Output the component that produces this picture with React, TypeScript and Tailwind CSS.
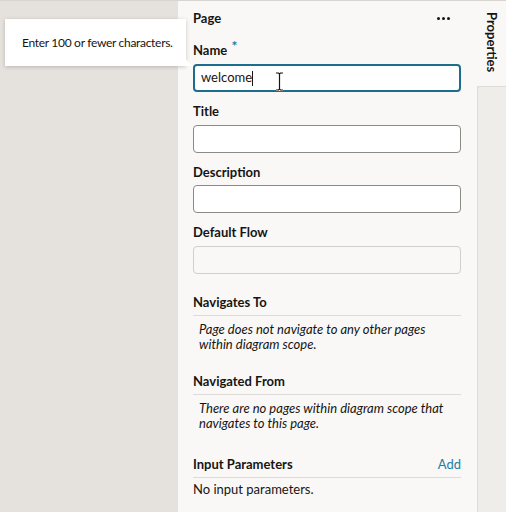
import React from "react";

const font = { fontFamily: 'Lato, "Noto Sans", sans-serif' };

function Label({ children, className = "" }: { children: React.ReactNode; className?: string }) {
  return (
    <div className={`h-[16px] text-[13px] leading-[16px] font-bold text-[#161513] whitespace-nowrap ${className}`}>{children}</div>
  );
}

function Section({ title, children, right }: { title: string; children: React.ReactNode; right?: React.ReactNode }) {
  return (
    <div className="flex flex-col">
      <div className="flex items-center justify-between h-[16px]">
        <Label>{title}</Label>
        {right}
      </div>
      <div className="mt-[5px] border-t border-[#dedcd8]" />
      {children}
    </div>
  );
}

export default function App() {
  return (
    <div
      className="relative w-[506px] h-[512px] flex bg-[#e5e2de] overflow-hidden border-t border-[#d8d5d1]"
      style={font}
    >
      <div className="w-[178px] shrink-0" />
      <div className="w-[299px] shrink-0 bg-[#f9f8f6] pl-[15px] pr-[16px] pt-[9px] flex flex-col">
        <div className="flex items-center justify-between h-[16px]">
          <Label>Page</Label>
          <div className="flex gap-[2px] mr-[11px]">
            <span className="w-[3px] h-[3px] rounded-full bg-[#161513]" />
            <span className="w-[3px] h-[3px] rounded-full bg-[#161513]" />
            <span className="w-[3px] h-[3px] rounded-full bg-[#161513]" />
          </div>
        </div>
        <Label className="mt-[16px]">
          Name{" "}
          <span className="text-[#227e9e] ml-[1px] relative -top-[4px] text-[14px] font-bold">*</span>
        </Label>
        <div className="relative mt-[6px] h-[28px] shrink-0 rounded-[4px] border-2 border-[#1b6e8c] bg-white flex items-center pl-[6px] text-[13px] text-[#161513]">
          welcome
          <span className="inline-block w-[1px] h-[15px] bg-[#161513]" />
          <svg className="absolute left-[80px] top-[6px]" width="9" height="19" viewBox="0 0 9 19">
            <path d="M1 1h2.5l1 1 1-1H8M4.5 2v15M1 18h2.5l1-1 1 1H8" stroke="#fff" strokeWidth="3" fill="none" />
            <path d="M1 1h2.5l1 1 1-1H8M4.5 2v15M1 18h2.5l1-1 1 1H8" stroke="#161513" strokeWidth="1.2" fill="none" />
          </svg>
        </div>
        <Label className="mt-[11px]">Title</Label>
        <div className="mt-[6px] h-[28px] shrink-0 rounded-[4px] border border-[#8c8a87] bg-white" />
        <Label className="mt-[11px]">Description</Label>
        <div className="mt-[5px] h-[28px] shrink-0 rounded-[4px] border border-[#8c8a87] bg-white" />
        <Label className="mt-[11px]">Default Flow</Label>
        <div className="mt-[6px] h-[28px] shrink-0 rounded-[4px] border border-[#d1cfcb] bg-[#f9f8f6]" />
        <div className="mt-[20px]">
          <Section title="Navigates To">
            <div className="mt-[6px] pl-[6px] italic text-[13px] leading-[15px] text-[#161513] whitespace-nowrap">
              Page does not navigate to any other pages
              <br />
              within diagram scope.
            </div>
          </Section>
        </div>
        <div className="mt-[21px]">
          <Section title="Navigated From">
            <div className="mt-[6px] pl-[6px] italic text-[13px] leading-[15px] text-[#161513] whitespace-nowrap">
              There are no pages within diagram scope that
              <br />
              navigates to this page.
            </div>
          </Section>
        </div>
        <div className="mt-[25px]">
          <Section
            title="Input Parameters"
            right={<span className="text-[13px] leading-[16px] text-[#227e9e]">Add</span>}
          >
            <div className="mt-[3px] text-[13px] leading-[16px] text-[#161513]">No input parameters.</div>
          </Section>
        </div>
      </div>
      <div className="w-[29px] shrink-0 flex flex-col">
        <div className="h-[85px] bg-[#f9f8f6] flex justify-center pt-[11px]">
          <span
            className="text-[13px] font-bold text-[#161513] leading-[14px]"
            style={{ writingMode: "vertical-rl" }}
          >
            Properties
          </span>
        </div>
        <div className="flex-1 bg-[#efedea] border-l border-t border-[#dedcd8] rounded-tl-[3px]" />
      </div>

      <div className="absolute left-[5px] top-[18px] w-[181px] h-[47px] bg-white shadow-[0_1px_4px_rgba(0,0,0,0.2)] flex items-center pl-[17px] text-[12px] tracking-[-0.3px] text-[#161513] whitespace-nowrap">
        Enter 100 or fewer characters.
        <svg className="absolute right-[-6px] bottom-[0px]" width="8" height="9" viewBox="0 0 8 9">
          <path d="M0 0 L8 9 L0 9 Z" fill="#fff" />
        </svg>
      </div>
    </div>
  );
}
